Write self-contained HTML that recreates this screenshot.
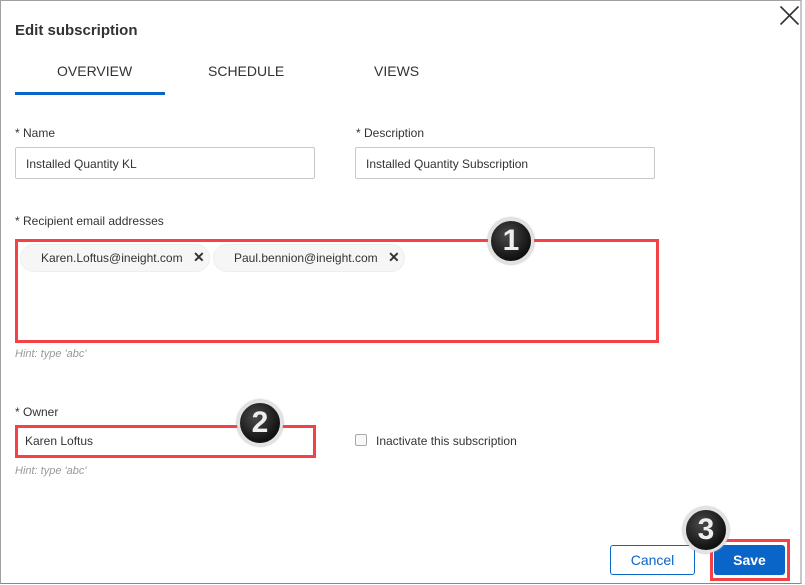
<!DOCTYPE html>
<html><head><meta charset="utf-8"><style>
*{box-sizing:border-box;margin:0;padding:0}
body{width:805px;height:585px;background:#fff;font-family:"Liberation Sans",sans-serif;position:relative;overflow:hidden;color:#333}
.frame{position:absolute;left:0;top:0;width:802px;height:584px;border:1px solid #a0a0a0;border-right:2px solid #c8c8c8;border-bottom:1px solid #888}
.a{position:absolute;white-space:nowrap}
.lbl{font-size:12px;color:#333}
.inp{position:absolute;border:1px solid #c8c8c8;border-radius:2px;height:32px;font-size:12px;color:#333;padding:9px 10px}
.chip{position:absolute;top:244px;height:28px;border-radius:14px;background:#f6f6f6;border:1px solid #eee;font-size:12px;color:#333;padding:6px 0 0 20px}
.red{position:absolute;border:3px solid #f44146}
.badge{position:absolute;width:46px;height:46px;border-radius:50%;background:radial-gradient(circle at 40% 35%,#4a4a4a,#111 70%);border:3px solid #e2e2e2;box-shadow:0 0 2px #999;color:#eee;font-weight:bold;font-size:30px;text-align:center;line-height:40px;font-family:"Liberation Sans",sans-serif}
.hint{font-size:11px;color:#999;font-style:italic}
</style></head><body>
<div class="frame"></div>
<div class="a" style="left:15px;top:22px;font-size:15px;font-weight:bold;color:#333">Edit subscription</div>
<svg class="a" style="left:779px;top:5px" width="21" height="21"><path d="M1.5 1.5L19.5 19.5M19.5 1.5L1.5 19.5" stroke="#333" stroke-width="1.6"/></svg>
<div class="a" style="left:57px;top:63px;font-size:14px;color:#333">OVERVIEW</div>
<div class="a" style="left:208px;top:63px;font-size:14px;color:#333">SCHEDULE</div>
<div class="a" style="left:374px;top:63px;font-size:14px;color:#333">VIEWS</div>
<div class="a" style="left:15px;top:92px;width:150px;height:3px;background:#0a65c8"></div>
<div class="a lbl" style="left:15px;top:126px">* Name</div>
<div class="inp" style="left:15px;top:147px;width:300px">Installed Quantity KL</div>
<div class="a lbl" style="left:356px;top:126px">* Description</div>
<div class="inp" style="left:355px;top:147px;width:300px">Installed Quantity Subscription</div>
<div class="a lbl" style="left:15px;top:214px">* Recipient email addresses</div>
<div class="red" style="left:15px;top:239px;width:644px;height:104px"></div>
<div class="chip" style="left:20px;width:190px">Karen.Loftus@ineight.com<span style="position:absolute;left:172px;top:4px;font-weight:bold;font-size:14px">✕</span></div>
<div class="chip" style="left:213px;width:192px">Paul.bennion@ineight.com<span style="position:absolute;left:174px;top:4px;font-weight:bold;font-size:14px">✕</span></div>
<div class="a hint" style="left:15px;top:348px">Hint: type 'abc'</div>
<div class="a lbl" style="left:15px;top:405px">* Owner</div>
<div class="red" style="left:15px;top:425px;width:301px;height:33px"></div>
<div class="a" style="left:25px;top:434px;font-size:12px">Karen Loftus</div>
<div class="a" style="top:434px;width:12px;height:12px;border:1px solid #aaa;border-radius:2px;background:#f8f8f8;left:355px"></div>
<div class="a" style="left:376px;top:434px;font-size:12px">Inactivate this subscription</div>
<div class="a hint" style="left:15px;top:465px">Hint: type 'abc'</div>
<div class="a" style="left:610px;top:545px;width:85px;height:30px;border:1px solid #0a65c8;border-radius:3px;color:#0a65c8;font-size:14px;text-align:center;line-height:28px">Cancel</div>
<div class="red" style="left:710px;top:539px;width:80px;height:42px"></div>
<div class="a" style="left:714px;top:545px;width:71px;height:30px;background:#0a65c8;border-radius:3px;color:#fff;font-weight:bold;font-size:14px;text-align:center;line-height:30px">Save</div>
<div class="badge" style="left:488px;top:218px">1</div>
<div class="badge" style="left:237px;top:400px">2</div>
<div class="badge" style="left:683px;top:507px">3</div>
</body></html>
